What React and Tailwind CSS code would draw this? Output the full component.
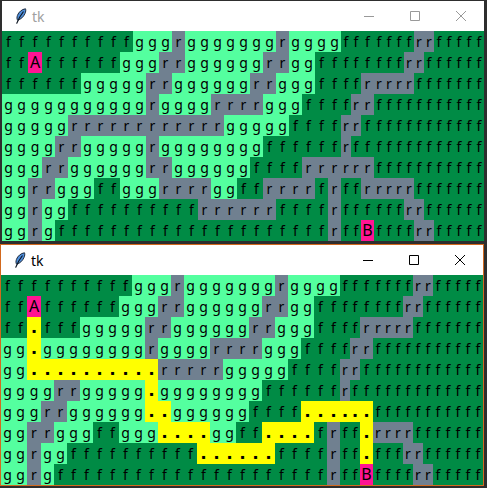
import React from 'react';

const topRows = [
  'ffffffffffgggrgggggggrggggfffffffrrfffff',
  'ffAffffffgggrrggggggrrggffffffffrrffffff',
  'ffffffgggggrrggggggrrgggffffrrrrrfffffff',
  'gggggggggggrggggrrrrgggffffrrfffffffffff',
  'gggggrrrrrrrrrrrrgggggffffrrffffffffffff',
  'ggggrrgggggrggggggggffffffrfffffffffffff',
  'gggrrggggggrrggggggffffrrrrrrfffffffffff',
  'ggrrgggffgggrrrrggffrrrrfrffrrrrrfffffff',
  'ggrggffffffffffrrrrrrffffrffffffrrffffff',
  'ggrgfffffffffffffffffffffrffBffffrrfffff',
];

const bottomRows = [
  topRows[0],
  topRows[1],
  'ff.fffgggggrrggggggrrgggffffrrrrrfffffff',
  'gg.ggggggggrggggrrrrgggffffrrfffffffffff',
  'gg..........rrrrrgggggffffrrffffffffffff',
  'ggggrrggggg.ggggggggffffffrfffffffffffff',
  'gggrrgggggg..ggggggffff......fffffffffff',
  'ggrrgggffggg....ggff....frff.rrrrfffffff',
  'ggrggffffffffff......ffffrff.fffrrffffff',
  topRows[9],
];

const cellClass = {
  f: 'min-w-[10px] bg-[#008b45]',
  g: 'min-w-[13px] bg-[#54ff9f]',
  r: 'min-w-[10px] bg-[#708090]',
  A: 'min-w-[14px] bg-[#ff1493] text-[16px]',
  B: 'min-w-[13px] bg-[#ff1493] text-[16px]',
  '.': 'min-w-[10px] bg-[#ffff00]',
};

const Feather = () => (
  <svg width="12" height="17" viewBox="0 0 12 17" className="shrink-0">
    <path d="M10.5 .8C7 1.2 3.6 4 2.4 7.5 1.8 9.3 1.8 11 2.6 12.2 5.6 11.6 8.6 8.8 10 5.5 10.8 3.6 11 2 10.5 .8Z" fill="#4f8fdc" stroke="#1d2a3c" strokeWidth="1" />
    <path d="M8.5 3.5C6.5 6 4 9.5 1.6 15.6" fill="none" stroke="#0d1520" strokeWidth="1.2" />
  </svg>
);

const TitleBar = ({ active }) => (
  <div className="h-[30px] bg-white flex items-center">
    <div className="ml-[13px] flex items-center gap-[5px]">
      <Feather />
      <span className={`text-[14px] font-['Noto_Sans',sans-serif] ${active ? 'text-black' : 'text-[#a0a0a0]'}`}>tk</span>
    </div>
    <div className={`ml-auto flex ${active ? 'text-black' : 'text-[#999999]'}`}>
      <div className="w-[46px] flex items-center justify-center">
        <svg width="10" height="10" viewBox="0 0 10 10"><path d="M0 5.5H10" stroke="currentColor" /></svg>
      </div>
      <div className="w-[46px] flex items-center justify-center">
        <svg width="10" height="10" viewBox="0 0 10 10"><path d="M.5 .5H9.5V9.5H.5Z" fill="none" stroke="currentColor" /></svg>
      </div>
      <div className="w-[46px] flex items-center justify-center">
        <svg width="10" height="10" viewBox="0 0 10 10"><path d="M0 0L10 10M10 0L0 10" stroke="currentColor" /></svg>
      </div>
    </div>
  </div>
);

const Board = ({ rows }) => (
  <div className="grid grid-cols-[repeat(40,auto)] justify-start font-['Noto_Sans',sans-serif] text-[14px] text-black">
    {rows.map((row, y) =>
      row.split('').map((ch, x) => (
        <div key={`${y}-${x}`} className={`h-[21px] leading-[21px] text-center ${cellClass[ch]}`}>
          {ch === '.' ? <span className="text-[6px] font-['DejaVu_Sans',sans-serif]">▪</span> : ch}
        </div>
      ))
    )}
  </div>
);

export default function App() {
  return (
    <div className="w-[487px] h-[488px] bg-[#2e2e2e] overflow-hidden">
      <div className="w-[482px] ml-[2px] mt-[1px] mb-[3px]">
        <TitleBar active={false} />
        <Board rows={topRows} />
      </div>
      <div className="w-[484px] border border-[#d2691e]">
        <TitleBar active />
        <Board rows={bottomRows} />
      </div>
    </div>
  );
}
